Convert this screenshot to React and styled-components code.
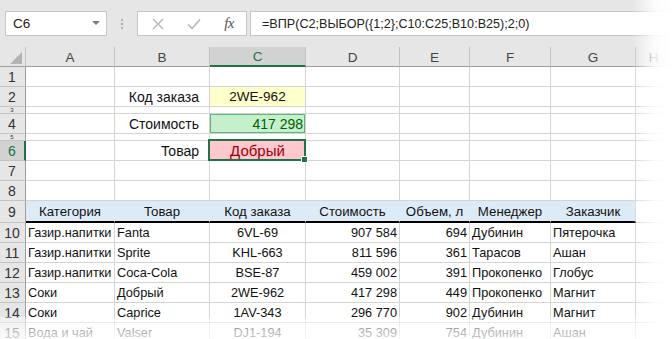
import React from 'react';
import styled, { createGlobalStyle } from 'styled-components';

const COLS = [26, 89, 95, 96, 94, 70, 81, 85];
const TEMPLATE = COLS.map((w) => `${w}px`).join(' ') + ' 1fr';
const GREEN = '#217346';

const GlobalStyle = createGlobalStyle`
  html, body { margin: 0; padding: 0; background: #fff; }
  body {
    font-family: "Liberation Sans", Arial, sans-serif;
    width: 672px; height: 339px; overflow: hidden;
  }
  * { box-sizing: border-box; }
`;

const Frame = styled.div`
  position: relative;
  width: 672px;
  height: 339px;
  overflow: hidden;
  background: #fff;
`;

const Toolbar = styled.div`
  height: 47px;
  background: #e6e6e6;
  display: flex;
  align-items: flex-start;
  padding: 11px 0 0 5px;
`;

const NameBox = styled.div`
  width: 102px;
  height: 25px;
  background: #fff;
  border: 1px solid #c6c6c6;
  display: flex;
  align-items: center;
  justify-content: space-between;
  padding: 0 6px 0 7px;
  font-size: 13.5px;
  color: #222;
`;

const Caret = styled.span`
  width: 0;
  height: 0;
  border-left: 4px solid transparent;
  border-right: 4px solid transparent;
  border-top: 4px solid #7a7a7a;
  margin-top: -2px;
`;

const Grip = styled.div`
  width: 3px;
  height: 25px;
  margin: 0 13px 0 14px;
  display: flex;
  flex-direction: column;
  justify-content: center;
  gap: 2px;
  & > span { width: 2px; height: 2px; background: #b0b0b0; }
`;

const FxGroup = styled.div`
  width: 110px;
  height: 25px;
  background: #fff;
  border: 1px solid #c6c6c6;
  display: flex;
  align-items: center;
  justify-content: space-between;
  padding: 0 12px 0 14px;
`;

const Fx = styled.span`
  font-family: "Liberation Serif", "Times New Roman", serif;
  font-style: italic;
  font-size: 15px;
  color: #555;
  letter-spacing: -0.5px;
`;

const FormulaInput = styled.div`
  flex: 1;
  margin-left: 3px;
  height: 25px;
  background: #fff;
  border: 1px solid #c6c6c6;
  border-right: none;
  display: flex;
  align-items: center;
  padding-left: 11px;
  font-size: 12.6px;
  color: #222;
  white-space: nowrap;
`;

const Sheet = styled.div`
  display: flex;
  flex-direction: column;
`;

const Row = styled.div`
  display: grid;
  grid-template-columns: ${TEMPLATE};
  height: ${(p) => p.$h}px;
`;

const ColHead = styled.div`
  background: ${(p) => (p.$active ? '#d2d2d2' : '#e6e6e6')};
  color: ${(p) => (p.$active ? GREEN : '#444')};
  border-right: 1px solid #c3c3c3;
  border-bottom: ${(p) => (p.$active ? `2px solid ${GREEN}` : '1px solid #9e9e9e')};
  display: flex;
  align-items: center;
  justify-content: center;
  font-size: 13.5px;
  padding-top: 1px;
`;

const Corner = styled.div`
  background: #e6e6e6;
  border-right: 1px solid #c3c3c3;
  border-bottom: 1px solid #9e9e9e;
  position: relative;
  &::after {
    content: '';
    position: absolute;
    right: 3px;
    bottom: 2px;
    width: 0;
    height: 0;
    border-left: 12px solid transparent;
    border-bottom: 12px solid #b3b3b3;
  }
`;

const RowHead = styled.div`
  background: ${(p) => (p.$active ? '#d2d2d2' : '#e6e6e6')};
  color: ${(p) => (p.$active ? GREEN : '#333')};
  border-right: ${(p) => (p.$active ? `2px solid ${GREEN}` : '1px solid #9e9e9e')};
  border-bottom: 1px solid #c3c3c3;
  display: flex;
  align-items: ${(p) => (p.$thin ? 'flex-end' : 'center')};
  justify-content: center;
  font-size: ${(p) => (p.$thin ? 6 : 14)}px;
  overflow: hidden;
  line-height: 1;
  padding-right: ${(p) => (p.$active ? 0 : 1)}px;
`;

const Cell = styled.div`
  position: relative;
  background: ${(p) => p.$bg || '#fff'};
  color: ${(p) => p.$color || '#111'};
  border-right: 1px solid ${(p) => (p.$noVLine ? p.$bg : '#d4d4d4')};
  border-bottom: ${(p) => p.$bottom || '1px solid #d4d4d4'};
  display: flex;
  align-items: center;
  justify-content: ${(p) =>
    p.$align === 'right' ? 'flex-end' : p.$align === 'center' ? 'center' : 'flex-start'};
  padding: 0 ${(p) => p.$indent || 2}px 0 2px;
  font-size: ${(p) => p.$size || 12.75}px;
  white-space: nowrap;
  overflow: ${(p) => (p.$visible ? 'visible' : 'hidden')};
  box-shadow: ${(p) => (p.$outline ? `inset 0 0 0 1px ${p.$outline}` : 'none')};
`;

const Selection = styled.div`
  position: absolute;
  top: -2px;
  left: -2px;
  right: -1px;
  bottom: -1px;
  border: 2px solid ${GREEN};
  pointer-events: none;
  z-index: 2;
`;

const FillHandle = styled.div`
  position: absolute;
  right: -4px;
  bottom: -4px;
  width: 7px;
  height: 7px;
  background: ${GREEN};
  border: 1px solid #fff;
`;

const FadeRight = styled.div`
  position: absolute;
  top: 0;
  right: 0;
  width: 40px;
  height: 100%;
  background: linear-gradient(to right, rgba(255,255,255,0) 0%, rgba(255,255,255,0.85) 55%, #fff 100%);
  pointer-events: none;
  z-index: 5;
`;

const FadeBottom = styled.div`
  position: absolute;
  left: 0;
  right: 0;
  bottom: 0;
  height: 22px;
  background: linear-gradient(to bottom, rgba(255,255,255,0.4) 0%, rgba(255,255,255,0.8) 100%);
  pointer-events: none;
  z-index: 4;
`;

const letters = ['A', 'B', 'C', 'D', 'E', 'F', 'G', 'H'];

const header = ['Категория', 'Товар', 'Код заказа', 'Стоимость', 'Объем, л', 'Менеджер', 'Заказчик'];
const data = [
  ['Газир.напитки', 'Fanta', '6VL-69', '907 584', '694', 'Дубинин', 'Пятерочка'],
  ['Газир.напитки', 'Sprite', 'KHL-663', '811 596', '361', 'Тарасов', 'Ашан'],
  ['Газир.напитки', 'Coca-Cola', 'BSE-87', '459 002', '391', 'Прокопенко', 'Глобус'],
  ['Соки', 'Добрый', '2WE-962', '417 298', '449', 'Прокопенко', 'Магнит'],
  ['Соки', 'Caprice', '1AV-343', '296 770', '902', 'Дубинин', 'Магнит'],
  ['Вода и чай', 'Valser', 'DJ1-194', '35 309', '754', 'Дубинин', 'Ашан'],
];
const aligns = ['left', 'left', 'center', 'right', 'right', 'left', 'left'];

const Blank = ({ n = 8 }) =>
  Array.from({ length: n }).map((_, i) => <Cell key={`b${i}`} />);

function XIcon() {
  return (
    <svg width="12" height="12" viewBox="0 0 12 12">
      <path d="M1 1 L11 11 M11 1 L1 11" stroke="#b4b4b4" strokeWidth="1.3" fill="none" />
    </svg>
  );
}

function CheckIcon() {
  return (
    <svg width="14" height="12" viewBox="0 0 14 12">
      <path d="M1 6.5 L5 10.5 L13 1.5" stroke="#b4b4b4" strokeWidth="1.5" fill="none" />
    </svg>
  );
}

export default function App() {
  return (
    <Frame>
      <GlobalStyle />
      <Toolbar>
        <NameBox>
          <span>C6</span>
          <Caret />
        </NameBox>
        <Grip>
          <span />
          <span />
          <span />
        </Grip>
        <FxGroup>
          <XIcon />
          <CheckIcon />
          <Fx>fx</Fx>
        </FxGroup>
        <FormulaInput>=ВПР(C2;ВЫБОР({'{'}1;2{'}'};C10:C25;B10:B25);2;0)</FormulaInput>
      </Toolbar>
      <Sheet>
        <Row $h={20}>
          <Corner />
          {letters.map((l) => (
            <ColHead key={l} $active={l === 'C'}>
              {l}
            </ColHead>
          ))}
        </Row>
        <Row $h={20}>
          <RowHead>1</RowHead>
          <Blank />
        </Row>
        <Row $h={20}>
          <RowHead>2</RowHead>
          <Cell />
          <Cell $align="right" $size={14} $indent={10}>Код заказа</Cell>
          <Cell $align="center" $bg="#ffffcc" $size={13.5}>2WE-962</Cell>
          <Blank n={5} />
        </Row>
        <Row $h={7}>
          <RowHead $thin>3</RowHead>
          <Blank />
        </Row>
        <Row $h={20}>
          <RowHead>4</RowHead>
          <Cell />
          <Cell $align="right" $size={14} $indent={10}>Стоимость</Cell>
          <Cell $align="right" $bg="#c6efce" $color="#006100" $outline="#5cb86e" $size={14}>
            417 298
          </Cell>
          <Blank n={5} />
        </Row>
        <Row $h={7}>
          <RowHead $thin>5</RowHead>
          <Blank />
        </Row>
        <Row $h={20}>
          <RowHead $active>6</RowHead>
          <Cell />
          <Cell $align="right" $size={14} $indent={10}>Товар</Cell>
          <Cell $align="center" $bg="#ffc7ce" $color="#9c0006" $size={15} $visible>
            Добрый
            <Selection>
              <FillHandle />
            </Selection>
          </Cell>
          <Blank n={5} />
        </Row>
        <Row $h={20}>
          <RowHead>7</RowHead>
          <Blank />
        </Row>
        <Row $h={20}>
          <RowHead>8</RowHead>
          <Blank />
        </Row>
        <Row $h={22}>
          <RowHead>9</RowHead>
          {header.map((h, i) => (
            <Cell
              key={h}
              $align="center"
              $bg="#ddebf7"
              $noVLine={i < 6}
              $bottom="2px solid #000"
              $size={13.25}
            >
              {h}
            </Cell>
          ))}
          <Cell />
        </Row>
        {data.map((r, ri) => (
          <Row $h={20} key={ri}>
            <RowHead>{10 + ri}</RowHead>
            {r.map((v, ci) => (
              <Cell key={ci} $align={aligns[ci]}>
                {v}
              </Cell>
            ))}
            <Cell />
          </Row>
        ))}
      </Sheet>
      <FadeBottom />
      <FadeRight />
    </Frame>
  );
}
